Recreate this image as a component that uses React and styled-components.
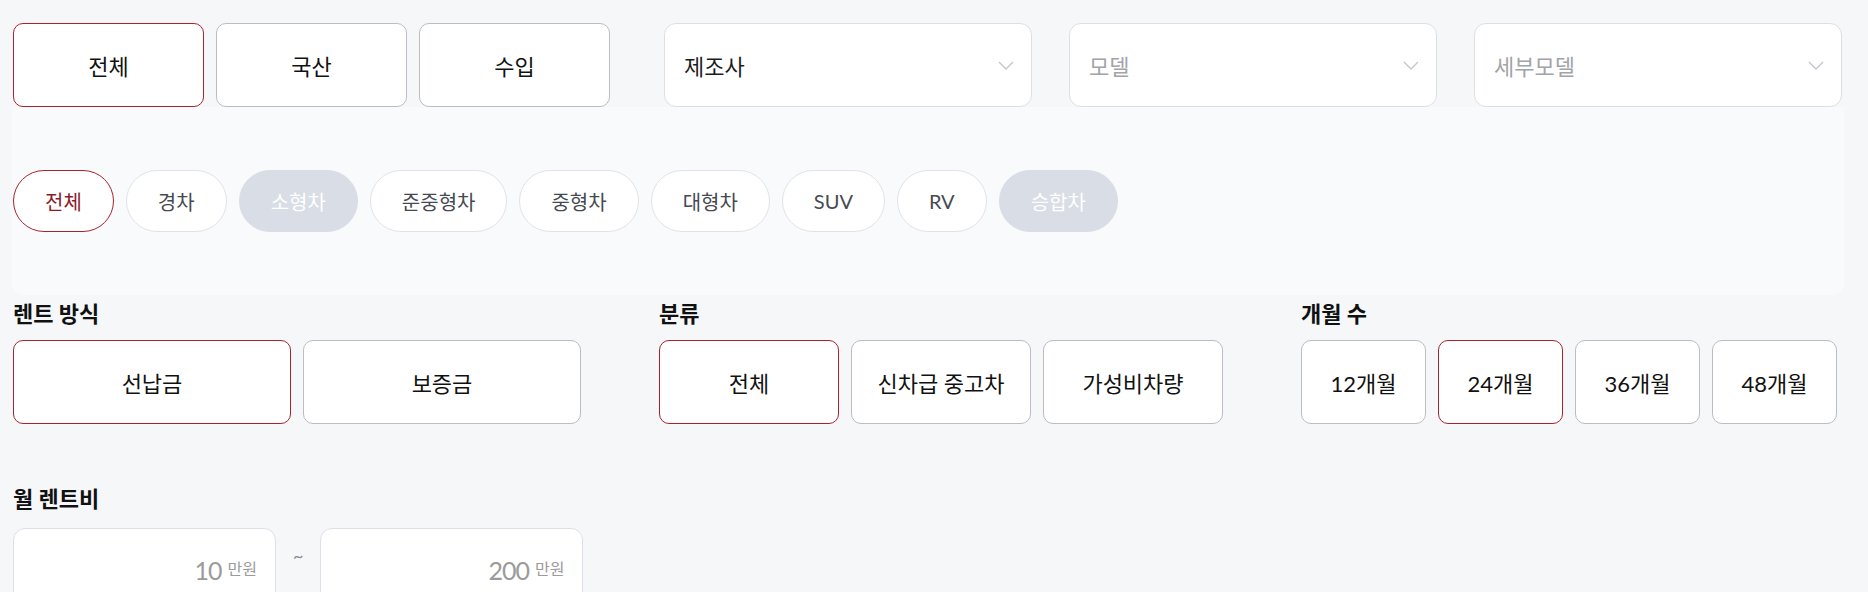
import {useState} from 'react';
import styled, {createGlobalStyle, css} from 'styled-components';

const GlobalStyle = createGlobalStyle`
  body {
    margin: 0;
    background: #f6f7f9;
    font-family: Lato, 'Noto Sans CJK KR', sans-serif;
    color: #111;
  }
`;

const ORIGINS = ['전체', '국산', '수입'];
const SELECTS = [
  {label: '제조사', filled: true},
  {label: '모델', filled: false},
  {label: '세부모델', filled: false},
];
const SIZES = [
  {label: '전체'},
  {label: '경차'},
  {label: '소형차', disabled: true},
  {label: '준중형차'},
  {label: '중형차'},
  {label: '대형차'},
  {label: 'SUV'},
  {label: 'RV'},
  {label: '승합차', disabled: true},
];
const RENT_TYPES = ['선납금', '보증금'];
const KINDS = ['전체', '신차급 중고차', '가성비차량'];
const MONTHS = ['12개월', '24개월', '36개월', '48개월'];

const Chevron = () => (
  <svg width="16" height="9" viewBox="0 0 16 9" fill="none">
    <path d="M1 1l7 7 7-7" stroke="#c4c7ce" strokeWidth="1.4" />
  </svg>
);

const App = () => {
  const [origin, setOrigin] = useState(0);
  const [size, setSize] = useState(0);
  const [rent, setRent] = useState(0);
  const [kind, setKind] = useState(0);
  const [month, setMonth] = useState(1);

  return (
    <Page>
      <GlobalStyle />
      <TopRow>
        <ButtonGroup>
          {ORIGINS.map((o, i) => (
            <OptionButton
              key={o}
              $width={191}
              $active={origin === i}
              onClick={() => setOrigin(i)}>
              {o}
            </OptionButton>
          ))}
        </ButtonGroup>
        <SelectGroup>
          {SELECTS.map(s => (
            <Select key={s.label}>
              <SelectText $filled={s.filled}>{s.label}</SelectText>
              <Chevron />
            </Select>
          ))}
        </SelectGroup>
      </TopRow>

      <ChipPanel>
        {SIZES.map((s, i) => (
          <Chip
            key={s.label}
            $active={size === i}
            $disabled={s.disabled}
            onClick={() => !s.disabled && setSize(i)}>
            {s.label}
          </Chip>
        ))}
      </ChipPanel>

      <SectionRow>
        <Section>
          <Label>렌트 방식</Label>
          <ButtonGroup>
            {RENT_TYPES.map((r, i) => (
              <OptionButton
                key={r}
                $width={278}
                $active={rent === i}
                onClick={() => setRent(i)}>
                {r}
              </OptionButton>
            ))}
          </ButtonGroup>
        </Section>
        <Section>
          <Label>분류</Label>
          <ButtonGroup>
            {KINDS.map((k, i) => (
              <OptionButton
                key={k}
                $width={180}
                $active={kind === i}
                onClick={() => setKind(i)}>
                {k}
              </OptionButton>
            ))}
          </ButtonGroup>
        </Section>
        <Section>
          <Label>개월 수</Label>
          <ButtonGroup>
            {MONTHS.map((m, i) => (
              <OptionButton
                key={m}
                $width={125}
                $active={month === i}
                onClick={() => setMonth(i)}>
                {m}
              </OptionButton>
            ))}
          </ButtonGroup>
        </Section>
      </SectionRow>

      <PriceSection>
        <Label>월 렌트비</Label>
        <RangeRow>
          <PriceBox>
            <Amount>10</Amount>
            <Unit>만원</Unit>
          </PriceBox>
          <Tilde>~</Tilde>
          <PriceBox>
            <Amount>200</Amount>
            <Unit>만원</Unit>
          </PriceBox>
        </RangeRow>
      </PriceSection>
    </Page>
  );
};

export default App;

const Page = styled.div`
  padding: 23px 24px 0 13px;
  width: 1868px;
  box-sizing: border-box;
`;

const TopRow = styled.div`
  display: flex;
  height: 84px;
`;

const ButtonGroup = styled.div`
  display: flex;
  gap: 12px;
`;

const OptionButton = styled.button`
  width: ${p => p.$width}px;
  height: 84px;
  box-sizing: border-box;
  background: #fff;
  border: 1px solid ${p => (p.$active ? '#a9232e' : '#babdc5')};
  border-radius: 10px;
  font-family: inherit;
  font-size: 22px;
  color: #111;
  cursor: pointer;
  padding: 0;
`;

const SelectGroup = styled.div`
  display: flex;
  gap: 37px;
  margin-left: 54px;
`;

const Select = styled.div`
  width: 368px;
  height: 84px;
  box-sizing: border-box;
  background: #fff;
  border: 1px solid #dcdfe6;
  border-radius: 12px;
  display: flex;
  align-items: center;
  justify-content: space-between;
  padding: 0 17px 0 19px;
`;

const SelectText = styled.span`
  font-size: 22px;
  color: ${p => (p.$filled ? '#1c1c1c' : '#a2a4a8')};
`;

const ChipPanel = styled.div`
  margin-left: -1px;
  height: 188px;
  background: #f9fafc;
  border-radius: 0 0 12px 12px;
  display: flex;
  align-items: center;
  gap: 12px;
  padding-left: 1px;
`;

const Chip = styled.button`
  height: 62px;
  box-sizing: border-box;
  padding: 0 31px;
  border-radius: 31px;
  font-family: inherit;
  font-size: 20px;
  cursor: pointer;
  background: #fff;
  border: 1px solid #e0e3e9;
  color: #454a52;
  ${p =>
    p.$active &&
    css`
      border-color: #a9232e;
      color: #8c1b29;
    `}
  ${p =>
    p.$disabled &&
    css`
      background: #d9dde5;
      border-color: #d9dde5;
      color: #fff;
      cursor: default;
    `}
`;

const SectionRow = styled.div`
  display: flex;
  gap: 78px;
  margin-top: 5px;
`;

const Section = styled.div`
  display: flex;
  flex-direction: column;
  gap: 12px;
`;

const Label = styled.div`
  font-size: 22px;
  font-weight: 700;
  line-height: 28px;
  color: #111;
`;

const PriceSection = styled.div`
  display: flex;
  flex-direction: column;
  gap: 15px;
  margin-top: 61px;
`;

const RangeRow = styled.div`
  display: flex;
  align-items: center;
  gap: 17px;
`;

const PriceBox = styled.div`
  width: 263px;
  height: 84px;
  box-sizing: border-box;
  background: #fff;
  border: 1px solid #dde0e7;
  border-radius: 12px;
  display: flex;
  align-items: center;
  justify-content: flex-end;
  gap: 6px;
  padding-right: 18px;
  color: #9b9b9b;
`;

const Amount = styled.span`
  font-size: 25px;
  letter-spacing: -1px;
`;

const Unit = styled.span`
  font-size: 16px;
  margin-top: -4px;
`;

const Tilde = styled.span`
  font-size: 18px;
  color: #8a8d93;
  margin-top: -30px;
`;
